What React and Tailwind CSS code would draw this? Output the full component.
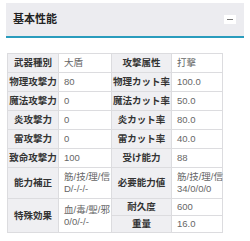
const rows = [
  ['武器種別', '大盾', '攻撃属性', '打撃'],
  ['物理攻撃力', '80', '物理カット率', '100.0'],
  ['魔法攻撃力', '0', '魔法カット率', '50.0'],
  ['炎攻撃力', '0', '炎カット率', '80.0'],
  ['雷攻撃力', '0', '雷カット率', '40.0'],
  ['致命攻撃力', '100', '受け能力', '88'],
]

const th = 'bg-[#efeff2] border border-[#dcdcdf] text-center font-bold text-[#333] p-0 whitespace-nowrap text-[9.5px]'
const td = 'bg-white border border-[#dcdcdf] text-left text-[#666] pl-[5px] py-0 text-[9.5px] whitespace-nowrap'

export default function App() {
  return (
    <div className="w-[250px] h-[241px] bg-white overflow-hidden" style={{ fontFamily: '"Liberation Sans", "Noto Sans CJK JP", sans-serif' }}>
      <div className="pt-[3px] px-[6px]">
        <div className="h-[35px] bg-[#ececf0] border-b-2 border-[#2a9cbd] flex items-center justify-between pl-[7px] pr-[8px]">
          <span className="text-[11px] font-bold text-[#222]">基本性能</span>
          <span className="w-[12px] h-[9px] bg-white flex items-center justify-center">
            <span className="w-[6px] h-px bg-[#777]" />
          </span>
        </div>
      </div>
      <div className="pl-[7px] pt-[15px]">
        <table className="border-collapse table-fixed w-[215px] leading-[12px]">
          <colgroup>
            <col className="w-[51px]" />
            <col className="w-[53px]" />
            <col className="w-[60px]" />
            <col className="w-[51px]" />
          </colgroup>
          <tbody>
            {rows.map(r => (
              <tr key={r[0]} className="h-[19px]">
                <th className={th}>{r[0]}</th>
                <td className={td}>{r[1]}</td>
                <th className={th}>{r[2]}</th>
                <td className={td}>{r[3]}</td>
              </tr>
            ))}
            <tr className="h-[31px]">
              <th className={th}>能力補正</th>
              <td className={td}>筋/技/理/信<br />D/-/-/-</td>
              <th className={th}>必要能力値</th>
              <td className={td}>筋/技/理/信<br />34/0/0/0</td>
            </tr>
            <tr className="h-[17px]">
              <th className={th} rowSpan={2}>特殊効果</th>
              <td className={td} rowSpan={2}>血/毒/聖/邪<br />0/0/-/-</td>
              <th className={th}>耐久度</th>
              <td className={td}>600</td>
            </tr>
            <tr className="h-[17px]">
              <th className={th}>重量</th>
              <td className={td}>16.0</td>
            </tr>
          </tbody>
        </table>
      </div>
    </div>
  )
}
